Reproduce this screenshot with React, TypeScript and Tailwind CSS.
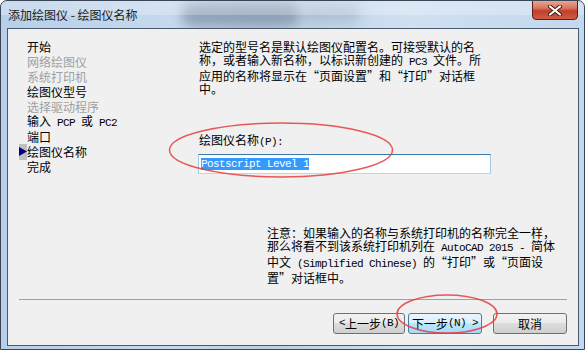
import React from "react";

const cjk = "font-['Noto_Sans_CJK_SC',sans-serif]";

// half-width latin, like SimSun's 6px advance
const M = ({ children }: { children: React.ReactNode }) => (
  <span className="font-['Liberation_Mono',monospace] text-[11px] tracking-[-0.6px]">{children}</span>
);

interface NavItem {
  label: React.ReactNode;
  disabled?: boolean;
  current?: boolean;
}

const navItems: NavItem[] = [
  { label: "开始" },
  { label: "网络绘图仪", disabled: true },
  { label: "系统打印机", disabled: true },
  { label: "绘图仪型号" },
  { label: "选择驱动程序", disabled: true },
  {
    label: (
      <>
        输入<M> PCP </M>或<M> PC2</M>
      </>
    ),
  },
  { label: "端口" },
  { label: "绘图仪名称", current: true },
  { label: "完成" },
];

const Button = ({
  children,
  focused,
  className,
}: {
  children: React.ReactNode;
  focused?: boolean;
  className?: string;
}) => (
  <button
    className={`h-[21px] rounded-[3px] border text-[12px] leading-none text-black flex items-center justify-center whitespace-nowrap ${
      focused
        ? "border-[#3c7fb1] bg-[linear-gradient(#eaf6fd_0%,#d9f0fc_45%,#bee6fd_50%,#a7d9f5_100%)]"
        : "border-[#707070] bg-[linear-gradient(#f2f2f2_0%,#ebebeb_45%,#dddddd_50%,#cfcfcf_100%)]"
    } ${className ?? ""}`}
  >
    {children}
  </button>
);

export default function App() {
  return (
    <div
      lang="zh-CN"
      className={`${cjk} relative w-[585px] h-[350px] overflow-hidden flex flex-col rounded-t-[7px] border border-[#3a4656] bg-[linear-gradient(90deg,#b7cfe8_0%,#c6d9ee_30%,#bccfe3_45%,#cfe0f1_70%,#c3d8ee_100%)]`}
    >
      {/* glass blur behind the title */}
      <div className="absolute left-[180px] top-[2px] w-[120px] h-[24px] rounded-full bg-[#6f8399] opacity-60 blur-[6px]" />
      <div className="absolute left-[300px] top-[4px] w-[60px] h-[18px] rounded-full bg-[#9fb2c6] opacity-60 blur-[6px]" />
      <div className="absolute left-0 top-0 w-full h-[14px] bg-white opacity-25" />

      {/* title bar */}
      <div className="relative h-[27px] flex items-start justify-between">
        <div className="pl-[7px] pt-[6px] text-[12px] leading-[16px] text-[#1a1a1a]">
          添加绘图仪 - 绘图仪名称
        </div>
        <div className="mt-[-1px] mr-[6px] w-[46px] h-[20px] rounded-b-[4px] border border-[#5a1f17] bg-[linear-gradient(#e9a792_0%,#d8735e_40%,#c0402a_55%,#cf5c43_100%)] flex items-center justify-center">
          <svg width="14" height="11" viewBox="0 0 14 11">
            <path d="M2 1.5 L12 9.5 M12 1.5 L2 9.5" stroke="#3d1a14" strokeWidth="4" strokeLinecap="round" />
            <path d="M2 1.5 L12 9.5 M12 1.5 L2 9.5" stroke="#ffffff" strokeWidth="2.2" strokeLinecap="round" />
          </svg>
        </div>
      </div>

      {/* client area */}
      <div className="relative ml-[6px] mr-[5px] h-[318px] border border-[#4a5a6e] bg-[#f0f0f0] flex flex-col text-[12px] text-black">
        <div className="h-[270px] flex">
          {/* steps */}
          <div className="w-[191px] pl-[11px] pt-[10px] flex flex-col">
            {navItems.map((item, i) => (
              <div key={i} className="h-[15px] flex items-center whitespace-nowrap">
                <span
                  className={`w-[8px] h-[16px] flex items-center ${item.current ? "bg-[#c0c0c0]" : ""}`}
                >
                  {item.current && (
                    <svg width="8" height="9" viewBox="0 0 8 9">
                      <path d="M0 0 L8 4.5 L0 9 Z" fill="#000080" />
                    </svg>
                  )}
                </span>
                <span className={`leading-[15px] ${item.disabled ? "text-[#a0a0a0]" : "text-black"}`}>
                  {item.label}
                </span>
              </div>
            ))}
          </div>

          {/* page body */}
          <div className="pt-[11px] flex flex-col">
            <div className="leading-[13px] whitespace-nowrap">
              <div>选定的型号名是默认绘图仪配置名。可接受默认的名</div>
              <div>
                称，或者输入新名称，以标识新创建的<M> PC3 </M>文件。所
              </div>
              <div>应用的名称将显示在“页面设置”和“打印”对话框</div>
              <div>中。</div>
            </div>

            <div className="mt-[38px] leading-[13px]">
              绘图仪名称<M>(P):</M>
            </div>
            <div className="mt-[5px] ml-[-1px] w-[293px] h-[20px] bg-white border border-[#a4c9e3] border-t-[#3d7bad] border-b-[#b7d9ed] flex items-center pl-[2px]">
              <span className="bg-[#3399ff] text-white h-[12px] leading-[12px] flex items-center">
                <M>Postscript Level 1</M>
              </span>
            </div>

            <div className="mt-[52px] ml-[68px] leading-[13px] whitespace-nowrap">
              <div>注意：如果输入的名称与系统打印机的名称完全一样，</div>
              <div>
                那么将看不到该系统打印机列在<M> AutoCAD 2015 - </M>简体
              </div>
              <div>
                中文<M> (Simplified Chinese) </M>的“打印”或“页面设
              </div>
              <div>置”对话框中。</div>
            </div>
          </div>
        </div>

        <div className="ml-[11px] w-[548px] h-px bg-[#a0a0a0]" />

        <div className="mt-[13px] mr-[11px] flex justify-end">
          <Button className="w-[72px]">
            <M>&lt; </M>上一步<M>(B)</M>
          </Button>
          <Button focused className="w-[74px] ml-[3px]">
            下一步<M>(N) &gt;</M>
          </Button>
          <Button className="w-[74px] ml-[11px]">取消</Button>
        </div>

        {/* red annotation marks */}
        <svg className="absolute left-[-8px] top-[-29px] pointer-events-none" width="585" height="350">
          <ellipse cx="281" cy="150" rx="111.5" ry="27" fill="none" stroke="#e63c3c" strokeOpacity="0.85" strokeWidth="1.5" />
          <ellipse cx="447" cy="314" rx="50" ry="19" fill="none" stroke="#e63c3c" strokeOpacity="0.85" strokeWidth="1.5" />
        </svg>
      </div>

      {/* bottom frame */}
      <div className="h-[3px]" />
    </div>
  );
}
